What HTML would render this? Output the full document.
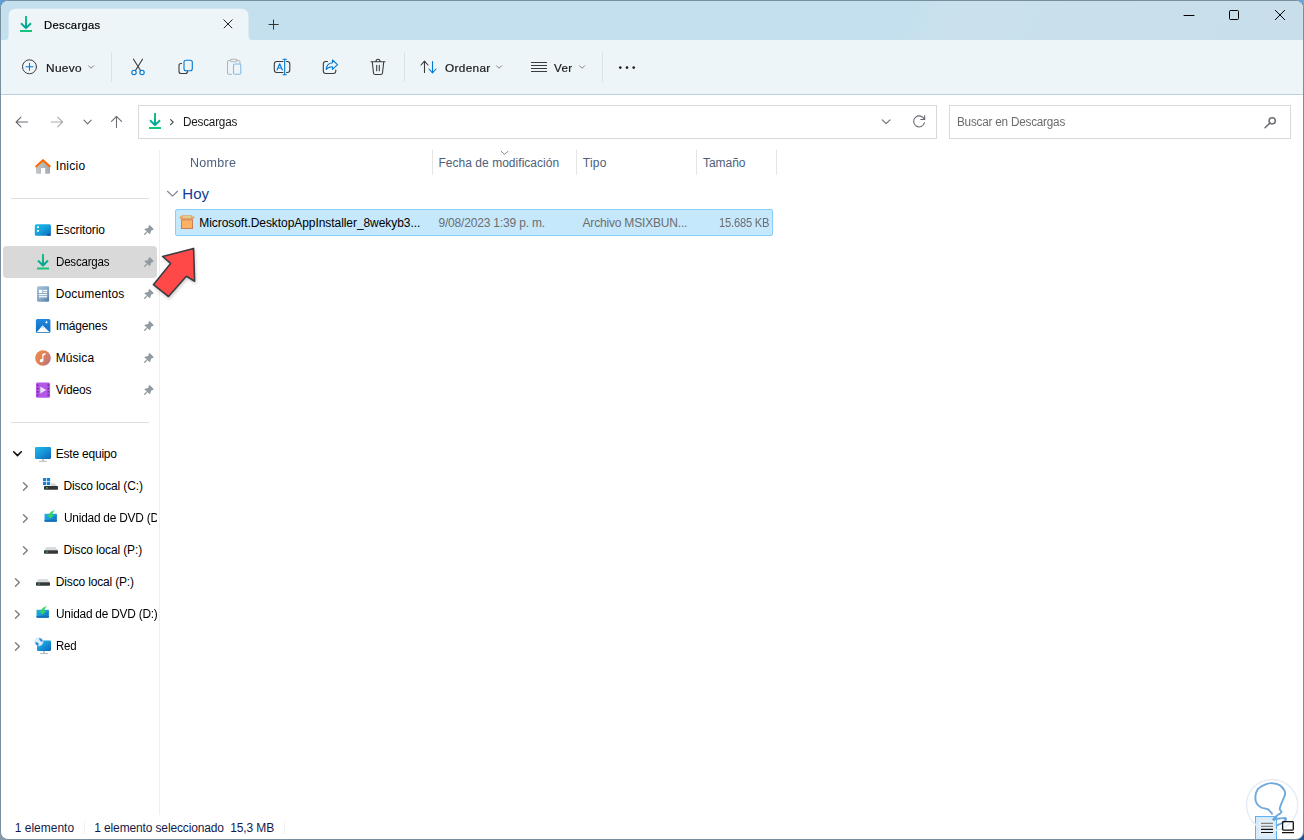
<!DOCTYPE html>
<html lang="es">
<head>
<meta charset="utf-8">
<title>Descargas</title>
<style>
html,body{margin:0;padding:0}
body{width:1304px;height:840px;overflow:hidden;position:relative;background:#4a6a8a;font-family:"Liberation Sans",sans-serif;font-size:12px}
#win{position:absolute;left:0;top:0;width:1302px;height:838px;border:1px solid #788fa0;border-radius:8px;background:#fff;overflow:hidden}
#win>*{position:absolute}
.abs{position:absolute}
.t{position:absolute;white-space:pre;margin:0}
svg{position:absolute;overflow:visible}
.vsep{position:absolute;width:1px;background:#dae3e9}
.hsep{position:absolute;width:1px;background:#e5e5e5}
</style>
</head>
<body>
<div class="abs" style="left:0;top:0;width:12px;height:12px;background:#5f9fd8"></div><div class="abs" style="right:0;top:0;width:12px;height:12px;background:#68a7dc"></div><div class="abs" style="left:0;bottom:0;width:12px;height:12px;background:#8a98a4"></div><div class="abs" style="right:0;bottom:0;width:12px;height:12px;background:#1c4f93"></div>
<div id="win">
<div id="inner" style="left:-1px;top:-1px;width:1304px;height:840px">
<!-- title bar -->
<div class="abs" id="titlebar" style="left:0;top:0;width:1304px;height:40px;background:linear-gradient(115deg,#c4e0ee 0,#c4e0ee 69.500%,#c9e1ed 71.500%,#c8dfeb 100%)"></div>
<!-- toolbar -->
<div class="abs" id="toolbar" style="left:0;top:40px;width:1304px;height:54px;background:#eef5f9;border-bottom:1px solid #b9d0de"></div>
<!-- tab -->
<svg style="left:0;top:0" width="260" height="41" viewBox="0 0 260 41"><path d="M3.800 40.500Q8.600 40.500 8.600 35.500L8.600 16.300Q8.600 8.800 16 8.800L241 8.800Q248.500 8.800 248.500 16.300L248.500 35.500Q248.500 40.500 253.300 40.500Z" fill="#eef5f9"/></svg>
<!-- address + search boxes -->
<div class="abs" style="left:138px;top:105px;width:797px;height:32px;border:1px solid #d9d9d9;background:#fff"></div>
<div class="abs" style="left:949px;top:105px;width:340px;height:32px;border:1px solid #d9d9d9;background:#fff"></div>
<!-- toolbar separators -->
<div class="vsep" style="left:111px;top:52px;height:30px"></div>
<div class="vsep" style="left:404px;top:52px;height:30px"></div>
<div class="vsep" style="left:602px;top:52px;height:30px"></div>
<!-- column header separators -->
<div class="hsep" style="left:432px;top:150px;height:25px"></div>
<div class="hsep" style="left:576px;top:150px;height:25px"></div>
<div class="hsep" style="left:696px;top:150px;height:25px"></div>
<div class="hsep" style="left:776px;top:150px;height:25px"></div>
<!-- sidebar / content divider -->
<div class="abs" style="left:159px;top:150px;width:1px;height:665px;background:#efefef"></div>
<!-- sidebar horizontal dividers -->
<div class="abs" style="left:11px;top:198px;width:138px;height:1px;background:#dedede"></div>
<div class="abs" style="left:11px;top:422px;width:138px;height:1px;background:#dedede"></div>
<!-- sidebar selected -->
<div class="abs" style="left:3px;top:246px;width:154px;height:32px;border-radius:4px;background:#d9d9d9"></div>
<!-- selected file row -->
<div class="abs" style="left:175px;top:209px;width:596px;height:25px;border:1px solid #86cffb;background:#c5e8fc;border-radius:2px"></div>
<!-- status separators -->
<div class="abs" style="left:84px;top:821px;width:1px;height:13px;background:#f0f0f0"></div>
<div class="abs" style="left:284px;top:821px;width:1px;height:13px;background:#f0f0f0"></div>
<!-- view buttons -->
<div class="abs" style="left:1255px;top:816px;width:20px;height:23px;border:1px solid #5eb2f3;background:#d6eafa"></div>
<div class="abs" style="left:1259px;top:820px;width:15px;height:16px;background:#e4eef7"></div>

<svg style="left:0;top:0" width="1304" height="840" viewBox="0 0 1304 840" fill="none" stroke-linecap="round" stroke-linejoin="round">
<defs>
<linearGradient id="gdl" x1="0" y1="0" x2="0" y2="1"><stop offset="0" stop-color="#16c47c"/><stop offset="0.450" stop-color="#0cb589"/><stop offset="0.780" stop-color="#02a19b"/><stop offset="0.860" stop-color="#16c47c"/><stop offset="1" stop-color="#16c47c"/></linearGradient>
</defs>
<!-- tab download icon -->
<path d="M26 16v12M21 23.200l5 5 5-5M20 31h12" stroke="url(#gdl)" stroke-width="2" stroke-linecap="butt" stroke-linejoin="miter"/>
<!-- tab close -->
<path d="M223.500 19.500l8.700 8.700M232.500 19.500l-8.700 8.700" stroke="#222" stroke-width="1" stroke-linecap="butt"/>
<!-- plus -->
<path d="M273.500 19.600v10M268.600 24.500h10" stroke="#333" stroke-width="1" stroke-linecap="butt"/>
<!-- window controls -->
<path d="M1184 15.5h10" stroke="#000" stroke-width="1"/>
<rect x="1229.500" y="10.500" width="9" height="9" rx="0.900" stroke="#000" stroke-width="1"/>
<path d="M1275.300 10.300l9.400 9.400M1284.700 10.300l-9.400 9.400" stroke="#000" stroke-width="1"/>
<!-- Nuevo circle plus -->
<circle cx="29.5" cy="66.8" r="7" stroke="#3b3b3b" stroke-width="1"/>
<path d="M29.5 63.3v7M26 66.8h7" stroke="#0078d4" stroke-width="1.1"/>
<!-- chevrons toolbar -->
<g stroke="#7d8186" stroke-width="1">
<path d="M88.600 65.800l2.500 2.500 2.500-2.500"/>
<path d="M496.600 65.800l2.500 2.500 2.500-2.500"/>
<path d="M579.600 65.800l2.500 2.500 2.500-2.500"/>
</g>
<!-- cut -->
<g stroke-width="1.1">
<path d="M133.5 59.2l7.2 11.6M142.5 59.2l-7.2 11.6" stroke="#3b3b3b"/>
<circle cx="134" cy="72.5" r="2.2" stroke="#0078d4"/>
<circle cx="142" cy="72.5" r="2.2" stroke="#0078d4"/>
</g>
<!-- copy -->
<g stroke-width="1.1">
<path d="M181.5 63.5h-0.5a2 2 0 0 0-2 2v6a2 2 0 0 0 2 2h4.500a2 2 0 0 0 2-2v-0.500" stroke="#3b3b3b"/>
<rect x="184" y="60.300" width="8.300" height="10.400" rx="2" stroke="#0078d4"/>
</g>
<!-- paste (disabled) -->
<g stroke-width="1.1" opacity="0.45">
<path d="M231.500 74.200h-2.500a1.500 1.500 0 0 1-1.500-1.500v-10.700a1.500 1.500 0 0 1 1.500-1.500h1.500M237 60.500h1.500a1.500 1.500 0 0 1 1.500 1.500v1.500" stroke="#6a6a6a"/>
<rect x="230.500" y="59.300" width="6.500" height="2.400" rx="1.200" stroke="#6a6a6a"/>
<rect x="233.500" y="64" width="7.300" height="10.200" rx="1.500" stroke="#0078d4"/>
</g>
<!-- rename -->
<g stroke-width="1.1">
<path d="M283 61.500h-6.200a2.500 2.500 0 0 0-2.500 2.500v6a2.500 2.500 0 0 0 2.500 2.500h6.200M286.500 61.500h0.800a2.500 2.500 0 0 1 2.500 2.500v6a2.500 2.500 0 0 1-2.500 2.500h-0.800" stroke="#3b3b3b"/>
<path d="M284.700 59.300v15.400M283 59.300h3.400M283 74.700h3.400" stroke="#0078d4"/>
<path d="M277 70l2.700-6.300 2.700 6.300M278 68h3.400" stroke="#0078d4"/>
</g>
<!-- share -->
<g stroke-width="1.1">
<path d="M327.500 61.500h-1.700a2.500 2.500 0 0 0-2.500 2.500v7a2.500 2.500 0 0 0 2.500 2.500h7.500a2.500 2.500 0 0 0 2.500-2.500v-1" stroke="#3b3b3b"/>
<path d="M332.500 60l5 4.700-5 4.700v-2.700c-3 0-4.800 0.800-6.300 2.800 0.300-3.500 2.300-6.300 6.300-6.700z" stroke="#0078d4"/>
</g>
<!-- trash -->
<g stroke-width="1.1" stroke="#3b3b3b">
<path d="M371 61.700h14M376 61.500c0-1.500 0.800-2.300 2-2.300s2 0.800 2 2.300M372.300 62l1.200 11a1.700 1.700 0 0 0 1.700 1.500h5.600a1.700 1.700 0 0 0 1.700-1.500l1.200-11M376.700 65.300v5.500M379.300 65.300v5.500"/>
</g>
<!-- sort -->
<g stroke-width="1.1">
<path d="M424.500 72.500v-11M421 65l3.500-3.800 3.500 3.800" stroke="#3b3b3b"/>
<path d="M432.500 61.500v11M429 69l3.500 3.800 3.500-3.800" stroke="#0078d4"/>
</g>
<!-- view -->
<path d="M531 62.500h16M531 65.500h16M531 68.500h16M531 71.500h16" stroke="#3b3b3b" stroke-width="1" stroke-linecap="butt"/>
<!-- dots -->
<g fill="#1a1a1a" stroke="none"><circle cx="620.300" cy="67.600" r="1.300"/><circle cx="627" cy="67.600" r="1.300"/><circle cx="633.700" cy="67.600" r="1.300"/></g>
<!-- nav arrows -->
<g stroke-width="1.100">
<path d="M27.500 122h-11.300M21 117.200l-4.900 4.800 4.900 4.800" stroke="#686c72"/>
<path d="M51.200 122h11.300M57.700 117.200l4.900 4.800-4.900 4.800" stroke="#a9acb0"/>
<path d="M84 120.200l3.600 3.600 3.600-3.600" stroke="#686c72"/>
<path d="M116.500 127.500v-11M111.500 121.300l5-5 5 5" stroke="#686c72"/>
</g>
<!-- address download icon -->
<path d="M155 113v12M150 120.200l5 5 5-5M149 128h12" stroke="url(#gdl)" stroke-width="2" stroke-linecap="butt" stroke-linejoin="miter"/>
<path d="M170.600 119.600l2.600 2.500-2.600 2.500" stroke="#505050" stroke-width="1.300"/>
<!-- address dropdown + refresh -->
<path d="M882.200 119.900l3.900 3.800 3.900-3.800" stroke="#686c72" stroke-width="1.100"/>
<path d="M924.300 119.500a5.500 5.500 0 1 0 0.200 3.200M924.700 115.500v4h-4" stroke="#686c72" stroke-width="1.100"/>
<!-- search icon -->
<g stroke="#6a6d72" stroke-width="1.500"><circle cx="1272.200" cy="120.800" r="3.100"/><path d="M1269.900 123.100l-4.900 4.700"/></g>
<!-- header sort chevron -->
<path d="M501.200 151.300l3.400 3.100 3.400-3.100" stroke="#8a8a8a" stroke-width="1"/>
<!-- Hoy chevron -->
<path d="M167.500 191.300l5 4.800 5-4.800" stroke="#7d8790" stroke-width="1.200"/>
<defs>
<linearGradient id="gbody" x1="0" y1="0" x2="1" y2="0"><stop offset="0" stop-color="#c2c6c9"/><stop offset="1" stop-color="#a5aaae"/></linearGradient>
<linearGradient id="gdesk" x1="0" y1="0" x2="1" y2="1"><stop offset="0" stop-color="#1cc0ea"/><stop offset="0.5" stop-color="#149fdc"/><stop offset="1" stop-color="#0d62b5"/></linearGradient>
<linearGradient id="gdoc" x1="0" y1="0" x2="1" y2="1"><stop offset="0" stop-color="#a9c4dc"/><stop offset="0.6" stop-color="#7fa3c4"/><stop offset="1" stop-color="#4f7aa3"/></linearGradient>
<linearGradient id="gimg" x1="0" y1="0" x2="0" y2="1"><stop offset="0" stop-color="#2088e0"/><stop offset="1" stop-color="#0f6cbd"/></linearGradient>
<linearGradient id="gmus" x1="0" y1="0" x2="1" y2="0.6"><stop offset="0" stop-color="#f28c44"/><stop offset="0.5" stop-color="#e08358"/><stop offset="1" stop-color="#c2747c"/></linearGradient>
<linearGradient id="gpc" x1="0" y1="0" x2="1" y2="1"><stop offset="0" stop-color="#22b8e6"/><stop offset="0.5" stop-color="#1596d8"/><stop offset="1" stop-color="#0d62b5"/></linearGradient>
<linearGradient id="gdvd" x1="0" y1="0" x2="1" y2="1"><stop offset="0" stop-color="#25b0e8"/><stop offset="0.550" stop-color="#1a96dc"/><stop offset="0.560" stop-color="#1583cc"/><stop offset="1" stop-color="#1577c2"/></linearGradient>
</defs>
<!-- home -->
<path d="M36 166v6.800a1 1 0 0 0 1 1h4v-5.800h4.200v5.800h3.800a1 1 0 0 0 1-1v-6.800l-7-6z" fill="url(#gbody)" stroke="none"/>
<path d="M36.200 166.400L42.900 160.200L49.700 166.400" stroke="#ff6a00" stroke-width="2.100" stroke-linecap="round" stroke-linejoin="round"/>
<!-- escritorio -->
<rect x="34.800" y="224.200" width="16.100" height="11.600" rx="1.500" fill="url(#gdesk)" stroke="none"/>
<rect x="37" y="226.400" width="2" height="1.700" fill="#fff" stroke="none"/><rect x="37" y="230" width="2" height="1.700" fill="#fff" stroke="none"/>
<rect x="47.500" y="234.300" width="1.300" height="1.500" fill="#0a3f7a" stroke="none"/><rect x="49.500" y="234.300" width="1" height="1.500" fill="#0a3f7a" stroke="none"/>
<!-- descargas sidebar -->
<path d="M43 254v11.500M38 260.500l5 5 5-5M37 268.400h12" stroke="url(#gdl)" stroke-width="2" stroke-linecap="butt" stroke-linejoin="miter"/>
<!-- documentos -->
<rect x="37" y="286.300" width="12.100" height="15.500" rx="1.200" fill="url(#gdoc)" stroke="none"/>
<g fill="#fff" stroke="none"><rect x="39" y="289.800" width="3.300" height="3.200"/><rect x="43.300" y="289.800" width="3.800" height="1.200"/><rect x="43.300" y="291.800" width="3.800" height="1.200"/><rect x="39" y="294" width="8.100" height="1.200"/><rect x="39" y="296.200" width="8.100" height="1.200"/></g>
<!-- imagenes -->
<rect x="35.900" y="319" width="14.500" height="14" rx="1.500" fill="url(#gimg)" stroke="none"/>
<path d="M36.600 332.300l6-6.800 7.200 6.800z" fill="#fff" stroke="none"/><path d="M40.300 328.300l2.300-2.800 2.600 2.600z" fill="#cfe6fa" stroke="none"/>
<path d="M46.500 320.600l0.500 1.100 1.100 0.500-1.100 0.500-0.500 1.100-0.500-1.100-1.100-0.500 1.100-0.500z" fill="#fff" stroke="none"/>
<!-- musica -->
<circle cx="43" cy="358" r="7.800" fill="url(#gmus)" stroke="none"/>
<path d="M42.300 354l3.200-0.900v1.700l-2.100 0.600v5.200a1.800 1.600 0 1 1-1.100-1.500z" fill="#fff" stroke="none"/>
<!-- videos -->
<rect x="35.900" y="382.400" width="14.200" height="15.300" rx="1.500" fill="#b556e8" stroke="none"/>
<g fill="#5a2a86" stroke="none"><rect x="37" y="384.500" width="1.500" height="1.500"/><rect x="37" y="387.800" width="1.500" height="1.500"/><rect x="37" y="391.100" width="1.500" height="1.500"/><rect x="37" y="394.400" width="1.500" height="1.500"/><rect x="47.500" y="384.500" width="1.500" height="1.500"/><rect x="47.500" y="387.800" width="1.500" height="1.500"/><rect x="47.500" y="391.100" width="1.500" height="1.500"/><rect x="47.500" y="394.400" width="1.500" height="1.500"/></g>
<path d="M40.300 386.500l6 3.500-6 3.500z" fill="#e9e0f2" stroke="none"/>
<!-- pins -->
<g transform="translate(143.700 225)" stroke="none" fill="#8f9aa2"><path d="M6 0.100L10.200 4.200L8.900 5.100L7.400 5.700L6.400 9L5.300 8.700L4.100 7.100L1 10.200L0.100 9.300L3.200 6.200L0.900 4.700L1.100 3.700L4.500 2.900L5 1.100Z"/></g><g transform="translate(143.700 257)" stroke="none" fill="#8f9aa2"><path d="M6 0.100L10.200 4.200L8.900 5.100L7.400 5.700L6.400 9L5.300 8.700L4.100 7.100L1 10.200L0.100 9.300L3.200 6.200L0.900 4.700L1.100 3.700L4.500 2.900L5 1.100Z"/></g><g transform="translate(143.700 289)" stroke="none" fill="#8f9aa2"><path d="M6 0.100L10.200 4.200L8.900 5.100L7.400 5.700L6.400 9L5.300 8.700L4.100 7.100L1 10.200L0.100 9.300L3.200 6.200L0.900 4.700L1.100 3.700L4.500 2.900L5 1.100Z"/></g><g transform="translate(143.700 321)" stroke="none" fill="#8f9aa2"><path d="M6 0.100L10.200 4.200L8.900 5.100L7.400 5.700L6.400 9L5.300 8.700L4.100 7.100L1 10.200L0.100 9.300L3.200 6.200L0.900 4.700L1.100 3.700L4.500 2.900L5 1.100Z"/></g><g transform="translate(143.700 353)" stroke="none" fill="#8f9aa2"><path d="M6 0.100L10.200 4.200L8.900 5.100L7.400 5.700L6.400 9L5.300 8.700L4.100 7.100L1 10.200L0.100 9.300L3.200 6.200L0.900 4.700L1.100 3.700L4.500 2.900L5 1.100Z"/></g><g transform="translate(143.700 385)" stroke="none" fill="#8f9aa2"><path d="M6 0.100L10.200 4.200L8.900 5.100L7.400 5.700L6.400 9L5.300 8.700L4.100 7.100L1 10.200L0.100 9.300L3.200 6.200L0.900 4.700L1.100 3.700L4.500 2.900L5 1.100Z"/></g>
<!-- este equipo -->
<path d="M13.700 451.800l3.800 3.800 3.800-3.800" stroke="#111" stroke-width="1.600"/>
<rect x="35" y="447" width="16" height="12" rx="1.300" fill="url(#gpc)" stroke="none"/>
<path d="M42.300 459h1.400v2h-1.400z" fill="#a9b1b8" stroke="none"/><rect x="39" y="460.800" width="8" height="1" fill="#b4bbc1" stroke="none"/>
<!-- disco C -->
<g transform="translate(22.800 482)" fill="none" stroke="#7a7a7a" stroke-width="1.300"><path d="M0.700 0.700l3.800 3.800-3.800 3.800"/></g>
<g fill="#1583d8" stroke="none"><rect x="43" y="478" width="3.200" height="3.200"/><rect x="46.900" y="478" width="3.200" height="3.200"/><rect x="43" y="481.900" width="3.200" height="3.200"/><rect x="46.900" y="481.900" width="3.200" height="3.200"/></g>
<path d="M50.800 483.200h3.700l2.500 2.800h-6.200z" fill="#d6d9dc" stroke="none"/><rect x="44" y="485.900" width="14" height="3.900" rx="0.800" fill="#333638" stroke="none"/><rect x="46.200" y="487.300" width="1.600" height="1.100" fill="#3fdc5a" stroke="none"/>
<!-- dvd sub -->
<g transform="translate(22.800 514)" fill="none" stroke="#7a7a7a" stroke-width="1.300"><path d="M0.700 0.700l3.800 3.800-3.800 3.800"/></g>
<g transform="translate(44.500 510)" stroke="none"><rect x="0" y="3.700" width="12.400" height="8.100" rx="0.700" fill="url(#gdvd)"/><path d="M0 10h12.400v1.100a0.700 0.700 0 0 1-0.700 0.700h-11a0.700 0.700 0 0 1-0.700-0.700z" fill="#1470b8"/><path d="M10.600 0.200C7.400 0.600 5.100 2.200 4.500 4.900L2.100 4.100L6 8.800L10 4.400L7.600 4.900C7.800 3 8.800 1.500 10.600 0.200Z" fill="#35d45c"/></g>
<!-- disco P sub -->
<g transform="translate(22.800 546)" fill="none" stroke="#7a7a7a" stroke-width="1.300"><path d="M0.700 0.700l3.800 3.800-3.800 3.800"/></g>
<g transform="translate(44 547)" stroke="none"><path d="M2.500 0h9l2.500 3.400h-14z" fill="#d9dcdf"/><rect x="0" y="3.200" width="14" height="3.500" rx="0.800" fill="#35383b"/><rect x="2.300" y="4.500" width="1.400" height="1" fill="#3fdc5a"/></g>
<!-- disco P -->
<g transform="translate(14.800 578)" fill="none" stroke="#7a7a7a" stroke-width="1.300"><path d="M0.700 0.700l3.800 3.800-3.800 3.800"/></g>
<g transform="translate(36 579)" stroke="none"><path d="M2.500 0h9l2.500 3.400h-14z" fill="#d9dcdf"/><rect x="0" y="3.200" width="14" height="3.500" rx="0.800" fill="#35383b"/><rect x="2.300" y="4.500" width="1.400" height="1" fill="#3fdc5a"/></g>
<!-- dvd -->
<g transform="translate(14.800 610)" fill="none" stroke="#7a7a7a" stroke-width="1.300"><path d="M0.700 0.700l3.800 3.800-3.800 3.800"/></g>
<g transform="translate(36.500 606)" stroke="none"><rect x="0" y="3.700" width="12.400" height="8.100" rx="0.700" fill="url(#gdvd)"/><path d="M0 10h12.400v1.100a0.700 0.700 0 0 1-0.700 0.700h-11a0.700 0.700 0 0 1-0.700-0.700z" fill="#1470b8"/><path d="M10.600 0.200C7.400 0.600 5.100 2.200 4.500 4.900L2.100 4.100L6 8.800L10 4.400L7.600 4.900C7.800 3 8.800 1.500 10.600 0.200Z" fill="#35d45c"/></g>
<!-- red -->
<g transform="translate(14.800 642)" fill="none" stroke="#7a7a7a" stroke-width="1.300"><path d="M0.700 0.700l3.800 3.800-3.800 3.800"/></g>
<rect x="37" y="640.500" width="14" height="10.500" rx="1.200" fill="url(#gpc)" stroke="none"/>
<path d="M43.300 651h1.400v2.200h-1.400z" fill="#a9b1b8" stroke="none"/><rect x="40" y="653" width="8" height="1" fill="#b4bbc1" stroke="none"/>
<circle cx="38.900" cy="641.800" r="4.100" fill="#dceefb" stroke="#bfe0f6" stroke-width="0.500"/>
<path d="M39.500 638c1.800 0.300 3 1.500 3.300 3.300c-1.300 0.800-2.300 0.300-2.800-0.800s-1.500-1.200-0.500-2.500zM35.200 642.500c1.200-0.600 2.600-0.300 3.200 0.700s0.300 2.200-0.600 2.600c-1.400-0.500-2.400-1.800-2.600-3.300z" fill="#2b8edb" stroke="none"/>
<!-- file icon -->
<path d="M179.200 217.500l1.600-1.500 0.900 0.900v-1.600h10.600v1.600l0.900-0.900 1.600 1.500-1.900 1.900h-11.800z" fill="#e9a262" stroke="none"/>
<rect x="183" y="216" width="8" height="2" fill="#dbd08f" stroke="none"/>
<rect x="181.500" y="219.800" width="11" height="8.700" fill="#ffb163" stroke="#c9805a" stroke-width="1" stroke-linejoin="miter"/>
<!-- red arrow -->
<g filter="url(#ash)">
<path d="M193.600 248.400L162.600 256.500L170.600 263.400L153.400 284.700L168.500 296.500L186.400 276.300L194.600 281.200Z" fill="#ff4a4a" stroke="#3a3d45" stroke-width="1.600" stroke-linejoin="round"/>
</g>
<defs><filter id="ash" x="-20%" y="-20%" width="150%" height="150%"><feDropShadow dx="1" dy="2" stdDeviation="1.500" flood-color="#000" flood-opacity="0.180"/></filter></defs>
<!-- watermark -->
<circle cx="1272.100" cy="805" r="25.600" stroke="#e7edf5" stroke-width="1.500" fill="none"/>
<path d="M1272.1 813.8C1271.4 813.0 1269.7 810.4 1267.9 809.3C1266.1 808.3 1263.1 808.5 1261.2 807.5C1259.4 806.5 1257.6 805.1 1256.7 803.3C1255.7 801.5 1255.2 799.0 1255.4 796.7C1255.6 794.3 1256.3 791.2 1257.9 789.2C1259.5 787.2 1262.6 785.6 1265.0 784.6C1267.4 783.6 1270.0 783.0 1272.5 783.2C1275.0 783.3 1278.0 784.1 1280.0 785.4C1282.0 786.7 1283.8 789.3 1284.6 790.8C1285.4 792.4 1285.3 793.1 1285.0 794.6C1284.7 796.1 1283.6 798.3 1282.9 800.0C1282.2 801.7 1281.3 803.5 1280.8 805.0C1280.3 806.5 1279.7 807.9 1279.8 809.2C1279.9 810.4 1281.9 811.3 1281.4 812.3C1281.0 813.4 1278.2 814.5 1277.1 815.4C1275.9 816.3 1275.1 817.3 1274.6 817.9C1274.0 818.5 1273.9 819.0 1273.8 819.2" stroke="#70a8dc" stroke-width="1.900" fill="none"/>
<path d="M1273.8 819.3C1274.7 819.2 1277.3 818.7 1279.2 818.5C1281.0 818.3 1283.9 817.9 1285.0 818.2C1286.1 818.4 1286.1 819.2 1285.7 820.0C1285.2 820.8 1284.0 821.8 1282.5 822.7C1281.0 823.6 1277.6 825.0 1276.7 825.4" stroke="#70a8dc" stroke-width="1.900" fill="none"/>
<circle cx="1273.900" cy="819.200" r="1.500" fill="#68a2d8" stroke="none"/><circle cx="1285.200" cy="818.600" r="1.400" fill="#68a2d8" stroke="none"/>
<!-- view buttons icons -->
<path d="M1261 823.300h12M1261 826.300h12" stroke="#6a6a6a" stroke-width="1" stroke-linecap="butt"/>
<path d="M1261 829.400h12M1261 832.500h12" stroke="#111" stroke-width="1.100" stroke-linecap="butt"/>
<rect x="1282.600" y="821.700" width="10.700" height="8.400" rx="0.800" stroke="#111" stroke-width="1.300" fill="none"/>
<path d="M1282 832.600h12" stroke="#111" stroke-width="1.100" stroke-linecap="butt"/>

</svg>

<header id="tabs">
<span class="t" style="left:44.1px;top:17.2px;font-size:11px;line-height:16px;color:#000;letter-spacing:0.300px;transform:scaleX(1.0231);transform-origin:0 50%;-webkit-text-stroke:0.2px">Descargas</span>
</header>
<div id="toolbar-text">
<span class="t" style="left:46.0px;top:60.2px;font-size:11px;line-height:16px;color:#1a1a1a;letter-spacing:0.300px;transform:scaleX(1.0800);transform-origin:0 50%;-webkit-text-stroke:0.2px">Nuevo</span>
<span class="t" style="left:444.6px;top:60.2px;font-size:11px;line-height:16px;color:#1a1a1a;letter-spacing:0.300px;transform:scaleX(1.0730);transform-origin:0 50%;-webkit-text-stroke:0.2px">Ordenar</span>
<span class="t" style="left:554.3px;top:60.2px;font-size:11px;line-height:16px;color:#1a1a1a;letter-spacing:0.300px;transform:scaleX(1.0541);transform-origin:0 50%;-webkit-text-stroke:0.2px">Ver</span>
</div>
<div id="address-text">
<span class="t" style="left:183.3px;top:113.8px;font-size:12px;line-height:16px;color:#1a1a1a;letter-spacing:-0.220px;transform:scaleX(0.9768);transform-origin:0 50%">Descargas</span>
<span class="t" style="left:957.3px;top:113.8px;font-size:12px;line-height:16px;color:#6b6b6b;letter-spacing:-0.220px;transform:scaleX(0.9777);transform-origin:0 50%">Buscar en Descargas</span>
</div>
<main id="files">
<span class="t" style="left:190.3px;top:154.8px;font-size:12px;line-height:16px;color:#4c607a;letter-spacing:0.300px;transform:scaleX(1.0420);transform-origin:0 50%">Nombre</span>
<span class="t" style="left:438.5px;top:154.8px;font-size:12px;line-height:16px;color:#4c607a;letter-spacing:0.030px">Fecha de modificación</span>
<span class="t" style="left:582.8px;top:154.8px;font-size:12px;line-height:16px;color:#4c607a;letter-spacing:0.227px">Tipo</span>
<span class="t" style="left:703.0px;top:154.8px;font-size:12px;line-height:16px;color:#4c607a;letter-spacing:-0.037px">Tamaño</span>
<span class="t" style="left:182.3px;top:183.8px;font-size:15px;line-height:20px;color:#0f3d99;letter-spacing:0.045px">Hoy</span>
<span class="t" style="left:199.3px;top:215.2px;font-size:12px;line-height:16px;color:#000;letter-spacing:-0.062px">Microsoft.DesktopAppInstaller_8wekyb3...</span>
<span class="t" style="left:438.4px;top:215.2px;font-size:12px;line-height:16px;color:#6d6d6d;letter-spacing:-0.174px">9/08/2023 1:39 p. m.</span>
<span class="t" style="left:582.5px;top:215.2px;font-size:12px;line-height:16px;color:#6d6d6d;letter-spacing:-0.185px">Archivo MSIXBUN...</span>
<span class="t" style="left:718.6px;top:215.2px;font-size:12px;line-height:16px;color:#6d6d6d;letter-spacing:-0.220px;transform:scaleX(0.9303);transform-origin:0 50%">15.685 KB</span>
</main>
<nav id="sidebar">
<span class="t" style="left:55.8px;top:157.8px;font-size:12px;line-height:16px;color:#000;letter-spacing:0.270px">Inicio</span>
<span class="t" style="left:55.8px;top:221.8px;font-size:12px;line-height:16px;color:#000;letter-spacing:-0.086px">Escritorio</span>
<span class="t" style="left:55.8px;top:253.8px;font-size:12px;line-height:16px;color:#000;letter-spacing:-0.220px;transform:scaleX(0.9641);transform-origin:0 50%">Descargas</span>
<span class="t" style="left:55.8px;top:285.8px;font-size:12px;line-height:16px;color:#000;letter-spacing:0.118px">Documentos</span>
<span class="t" style="left:55.8px;top:317.8px;font-size:12px;line-height:16px;color:#000;letter-spacing:-0.160px">Imágenes</span>
<span class="t" style="left:55.8px;top:349.8px;font-size:12px;line-height:16px;color:#000;letter-spacing:0.052px">Música</span>
<span class="t" style="left:55.8px;top:381.8px;font-size:12px;line-height:16px;color:#000;letter-spacing:-0.143px">Videos</span>
<span class="t" style="left:55.8px;top:445.8px;font-size:12px;line-height:16px;color:#000;letter-spacing:-0.218px">Este equipo</span>
<span class="t" style="left:63.5px;top:477.8px;font-size:12px;line-height:16px;color:#000;letter-spacing:-0.126px">Disco local (C:)</span>
<span class="t" style="left:63.5px;top:509.8px;font-size:12px;line-height:16px;color:#000;letter-spacing:-0.220px;transform:scaleX(0.9886);transform-origin:0 50%;width:94.2px;overflow:hidden">Unidad de DVD (D:)</span>
<span class="t" style="left:63.5px;top:541.8px;font-size:12px;line-height:16px;color:#000;letter-spacing:-0.135px">Disco local (P:)</span>
<span class="t" style="left:55.8px;top:573.8px;font-size:12px;line-height:16px;color:#000;letter-spacing:-0.167px">Disco local (P:)</span>
<span class="t" style="left:55.8px;top:605.8px;font-size:12px;line-height:16px;color:#000;letter-spacing:-0.220px;transform:scaleX(0.9886);transform-origin:0 50%">Unidad de DVD (D:)</span>
<span class="t" style="left:55.8px;top:637.8px;font-size:12px;line-height:16px;color:#000;letter-spacing:-0.220px;transform:scaleX(0.9550);transform-origin:0 50%">Red</span>
</nav>
<footer id="status">
<span class="t" style="left:14.7px;top:819.6px;font-size:12px;line-height:16px;color:#141c4a;letter-spacing:0.003px">1 elemento</span>
<span class="t" style="left:94.3px;top:819.6px;font-size:12px;line-height:16px;color:#141c4a;letter-spacing:-0.137px">1 elemento seleccionado  15,3 MB</span>
</footer>
</div>
</div>
</body>
</html>
